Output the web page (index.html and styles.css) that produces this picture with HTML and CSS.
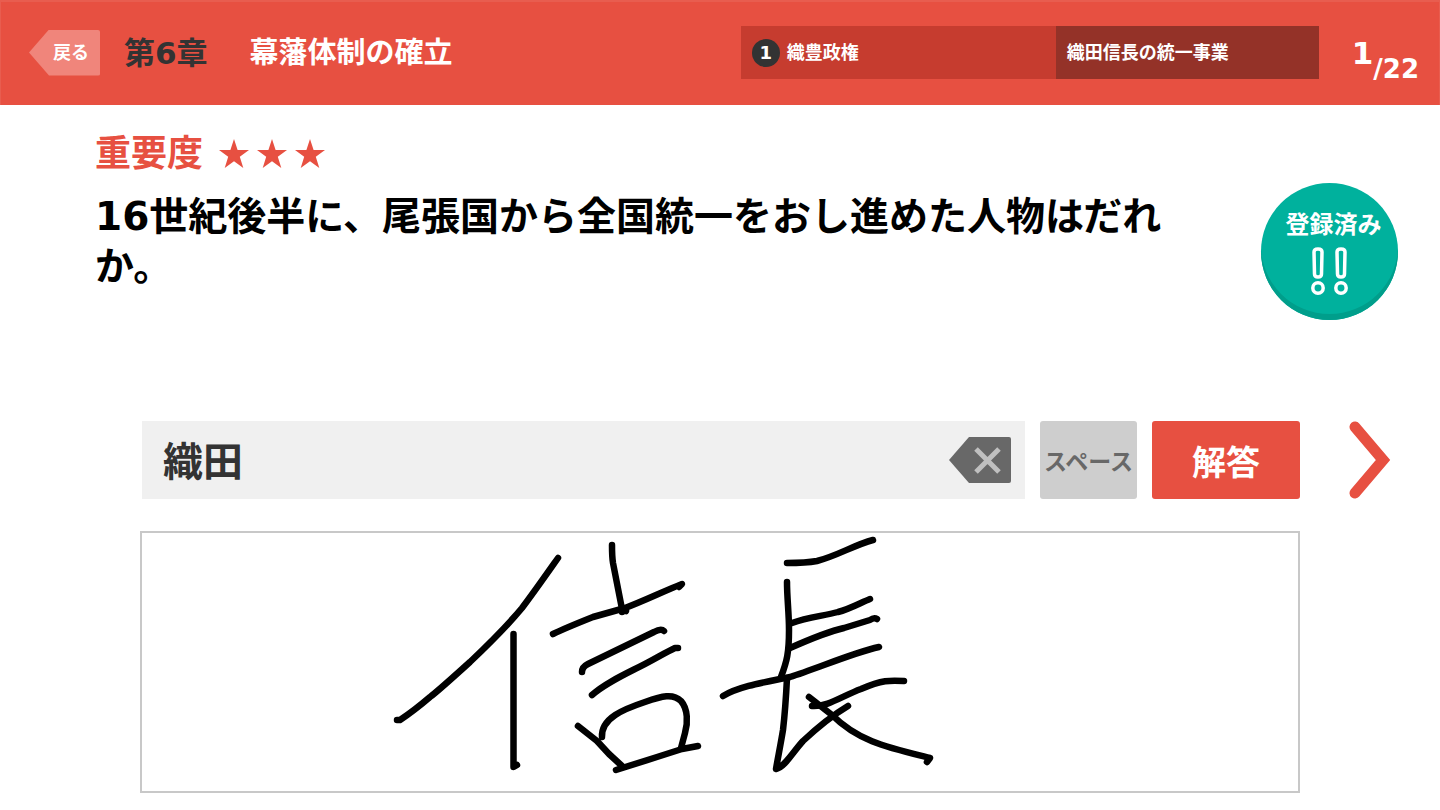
FILE: index.html
```html
<!DOCTYPE html>
<html lang="ja">
<head>
    <meta charset="UTF-8">
    <meta name="viewport" content="width=device-width, initial-scale=1.0">
    <title>第6章 幕藩体制の確立</title>
    <link rel="stylesheet" href="styles.css">
</head>
<body>

    <!-- Header -->
    <header class="header">
        <button class="back-btn" type="button">戻る</button>
        <h1 class="chapter"><span class="chapter-no">第6章</span><span class="chapter-title">幕藩体制の確立</span></h1>
        <div class="crumbs">
            <div class="crumb section"><span class="section-no">1</span>織豊政権</div>
            <div class="crumb topic">織田信長の統一事業</div>
        </div>
        <div class="counter">
            <span class="current">1</span><span class="total">/22</span>
        </div>
    </header>

    <main>
        <!-- Question -->
        <section class="question">
            <div class="question-body">
                <div class="importance">
                    重要度
                    <svg class="stars" width="106" height="30" viewBox="0 0 106 30" role="img" aria-label="3">
                        <defs>
                            <path id="star" d="M15 0 L18.6 11 H30 L20.8 17.8 L24.3 29 L15 22.2 L5.700 29 L9.200 17.8 L0 11 H11.400 Z"/>
                        </defs>
                        <use href="#star"/>
                        <use href="#star" x="38"/>
                        <use href="#star" x="76"/>
                    </svg>
                </div>
                <p class="question-text">16世紀後半に、尾張国から全国統一をおし進めた人物はだれか。</p>
            </div>
            <button class="saved-btn" type="button">
                登録済み
                <svg width="38" height="48" viewBox="0 0 38 48" aria-hidden="true">
                    <path d="M3 5 Q3 2 7 2 Q11 2 11 5 L10.500 27 Q10.500 30 7 30 Q3.500 30 3.500 27 Z"/>
                    <circle cx="7" cy="41" r="5.200"/>
                    <path d="M26 5 Q26 2 30 2 Q34 2 34 5 L33.500 27 Q33.500 30 30 30 Q26.500 30 26.500 27 Z"/>
                    <circle cx="30" cy="41" r="5.200"/>
                </svg>
            </button>
        </section>

        <!-- Answer -->
        <form class="answer">
            <div class="answer-box">
                <input class="answer-input" type="text" value="織田" aria-label="解答">
                <button class="delete-btn" type="button" aria-label="削除">
                    <svg width="62" height="46" viewBox="0 0 62 46">
                        <path class="key" d="M0 23 L20 0 H60 Q62 0 62 2 V44 Q62 46 60 46 H20 Z"/>
                        <path class="cross" d="M27 12 L50 35 M50 12 L27 35"/>
                    </svg>
                </button>
            </div>
            <button class="space-btn" type="button">スペース</button>
            <button class="submit-btn" type="button">解答</button>
            <button class="next-btn" type="button" aria-label="次へ">
                <svg width="42" height="78" viewBox="0 0 42 78">
                    <path d="M6 6 L34 39 L6 72"/>
                </svg>
            </button>
        </form>

        <!-- Handwriting area -->
        <div class="pad">
            <svg width="1156" height="258" viewBox="0 0 1156 258" role="img" aria-label="信長">
                <!-- left character -->
                <path d="M416 25 C404 42 390 62 380 75 C366 92 348 110 328 129 C308 147 296 158 288 164 C274 176 264 183 258 187 L255 187"/>
                <path d="M371.500 101 L371.500 234 L375 232"/>
                <path d="M470 12 C470 20 470 24 471 30 L480 76 L484 78 M480 76 V79"/>
                <path d="M411 101 C421 96 436 90 451 84 L483 75 C502 68 522 58 540 51 L537 54"/>
                <path d="M440 139 C440 136 442 133 446 131 L512 99 Q519 95 522 98"/>
                <path d="M450 162 C461 152 477 144 493 136 C510 128 522 120 533 115 L536 115"/>
                <path d="M436 193 L455 208 L467 221 L480 233"/>
                <path d="M460 204 C459 185 482 176 503 169 C520 163 531 160 539 168 C546 176 546 190 543 200 L539 215"/>
                <path d="M474 237 L515 224 L540 216 L556 213"/>
                <!-- right character -->
                <path d="M645 30 C655 30 664 30 675 28 C695 23 712 12 731 7"/>
                <path d="M645 49 C645 65 647 80 647 97 C647 120 645 128 639 144"/>
                <path d="M650 90 C666 84 682 83 696 79 C708 76 720 69 728 66"/>
                <path d="M648 115 C666 107 684 99 702 95 L728 87 Q732 84 735 86"/>
                <path d="M581 163 C598 153 624 149 648 144 C674 136 710 120 737 114"/>
                <path d="M645 145 C644 165 643 180 641 197 C638 215 636 224 634 236 C643 234 650 220 661 208 C677 193 691 182 706 173"/>
                <path d="M670 173 C686 174 700 163 719 156 C740 147 748 147 762 148"/>
                <path d="M667 164 L690 182 C716 208 744 214 788 225 L785 229"/>
            </svg>
        </div>
    </main>

</body>
</html>
```

FILE: styles.css
```css
* {
    box-sizing: border-box;
}
body {
    margin: 0;
    background-color: #fff;
    color: #000;
    font-family: "DejaVu Sans", "Noto Sans CJK JP", sans-serif;
    font-weight: bold;
}
button,
input {
    border: none;
    padding: 0;
    margin: 0;
    font: inherit;
}
button {
    cursor: pointer;
}
svg {
    display: block;
}

/* Header */
.header {
    display: flex;
    align-items: center;
    height: 105px;
    padding: 0 21px 0 29px;
    background-color: #e75041;
    box-shadow: inset 0 1px 0 1px rgba(255, 255, 255, 0.08);
    color: #fff;
}
.back-btn {
    width: 71px;
    height: 46px;
    padding-left: 13px;
    background-color: #f0857b;
    border-radius: 2px;
    clip-path: polygon(0 50%, 20px 0, 100% 0, 100% 100%, 20px 100%);
    color: #fff;
    font-size: 18px;
    line-height: 46px;
}
.chapter {
    display: flex;
    align-items: center;
    gap: 42px;
    margin: 0 0 0 24px;
    font-size: 29px;
    line-height: 40px;
    white-space: nowrap;
}
.chapter-no {
    color: #333;
    font-size: 31px;
}
.crumbs {
    display: flex;
    width: 578px;
    height: 53px;
    margin-left: auto;
    font-size: 18px;
    line-height: 53px;
}
.crumb {
    display: flex;
    align-items: center;
    padding: 0 11px;
}
.section {
    width: 315px;
    gap: 7px;
    background-color: #c63c2f;
}
.topic {
    flex: 1;
    background-color: #943228;
}
.section-no {
    width: 28px;
    height: 28px;
    border-radius: 50%;
    background-color: #333;
    line-height: 28px;
    text-align: center;
}
.counter {
    display: flex;
    align-items: flex-start;
    margin: 16px 0 0 33px;
    line-height: 40px;
}
.current {
    font-size: 31px;
}
.total {
    padding-top: 16px;
    font-size: 26px;
}

/* Question */
.question {
    display: flex;
    align-items: flex-start;
    gap: 80px;
    height: 316px;
    padding: 29px 42px 0 95px;
}
.question-body {
    flex: 1;
}
.importance {
    display: flex;
    align-items: center;
    gap: 16px;
    color: #e75041;
    font-size: 36px;
    line-height: 40px;
}
.stars {
    fill: #e75041;
}
.question-text {
    margin: 18px 0 0;
    font-size: 39px;
    line-height: 50px;
}
.saved-btn {
    display: flex;
    flex-direction: column;
    align-items: center;
    gap: 7px;
    width: 137px;
    height: 137px;
    margin-top: 49px;
    padding: 27px 0 0 8px;
    border-radius: 50%;
    background-color: #00b19d;
    box-shadow: inset 0 -6px 0 #009e8b;
    color: #fff;
    font-size: 24px;
    line-height: 30px;
}
.saved-btn svg {
    margin-right: 8px;
    fill: none;
    stroke: #fff;
    stroke-width: 3.5;
}

/* Answer */
.answer {
    display: flex;
    gap: 15px;
    height: 78px;
    margin: 0 49px 0 142px;
}
.answer-box {
    display: flex;
    flex: 1;
    align-items: center;
    padding: 0 14px 0 21px;
    background-color: #f0f0f0;
}
.answer-input {
    flex: 1;
    min-width: 0;
    height: 78px;
    padding-bottom: 3px;
    background: none;
    color: #333;
    font-size: 40px;
    outline: none;
}
.delete-btn,
.next-btn {
    background: none;
}
.key {
    fill: #686868;
}
.cross {
    fill: none;
    stroke: #c0c0c0;
    stroke-width: 5;
}
.space-btn {
    width: 97px;
    border-radius: 3px;
    background-color: #cecece;
    color: #686868;
    font-size: 23px;
    white-space: nowrap;
}
.submit-btn {
    width: 148px;
    border-radius: 3px;
    background-color: #e75041;
    color: #fff;
    font-size: 34px;
}
.next-btn {
    margin-left: 34px;
}
.next-btn path {
    fill: none;
    stroke: #e75041;
    stroke-width: 11;
    stroke-linecap: round;
}

/* Handwriting area */
.pad {
    margin: 32px 140px 16px;
    border: 2px solid #c8c8c8;
}
.pad svg {
    max-width: 100%;
    fill: none;
    stroke: #000;
    stroke-width: 6.5;
    stroke-linecap: round;
    stroke-linejoin: round;
}
```
